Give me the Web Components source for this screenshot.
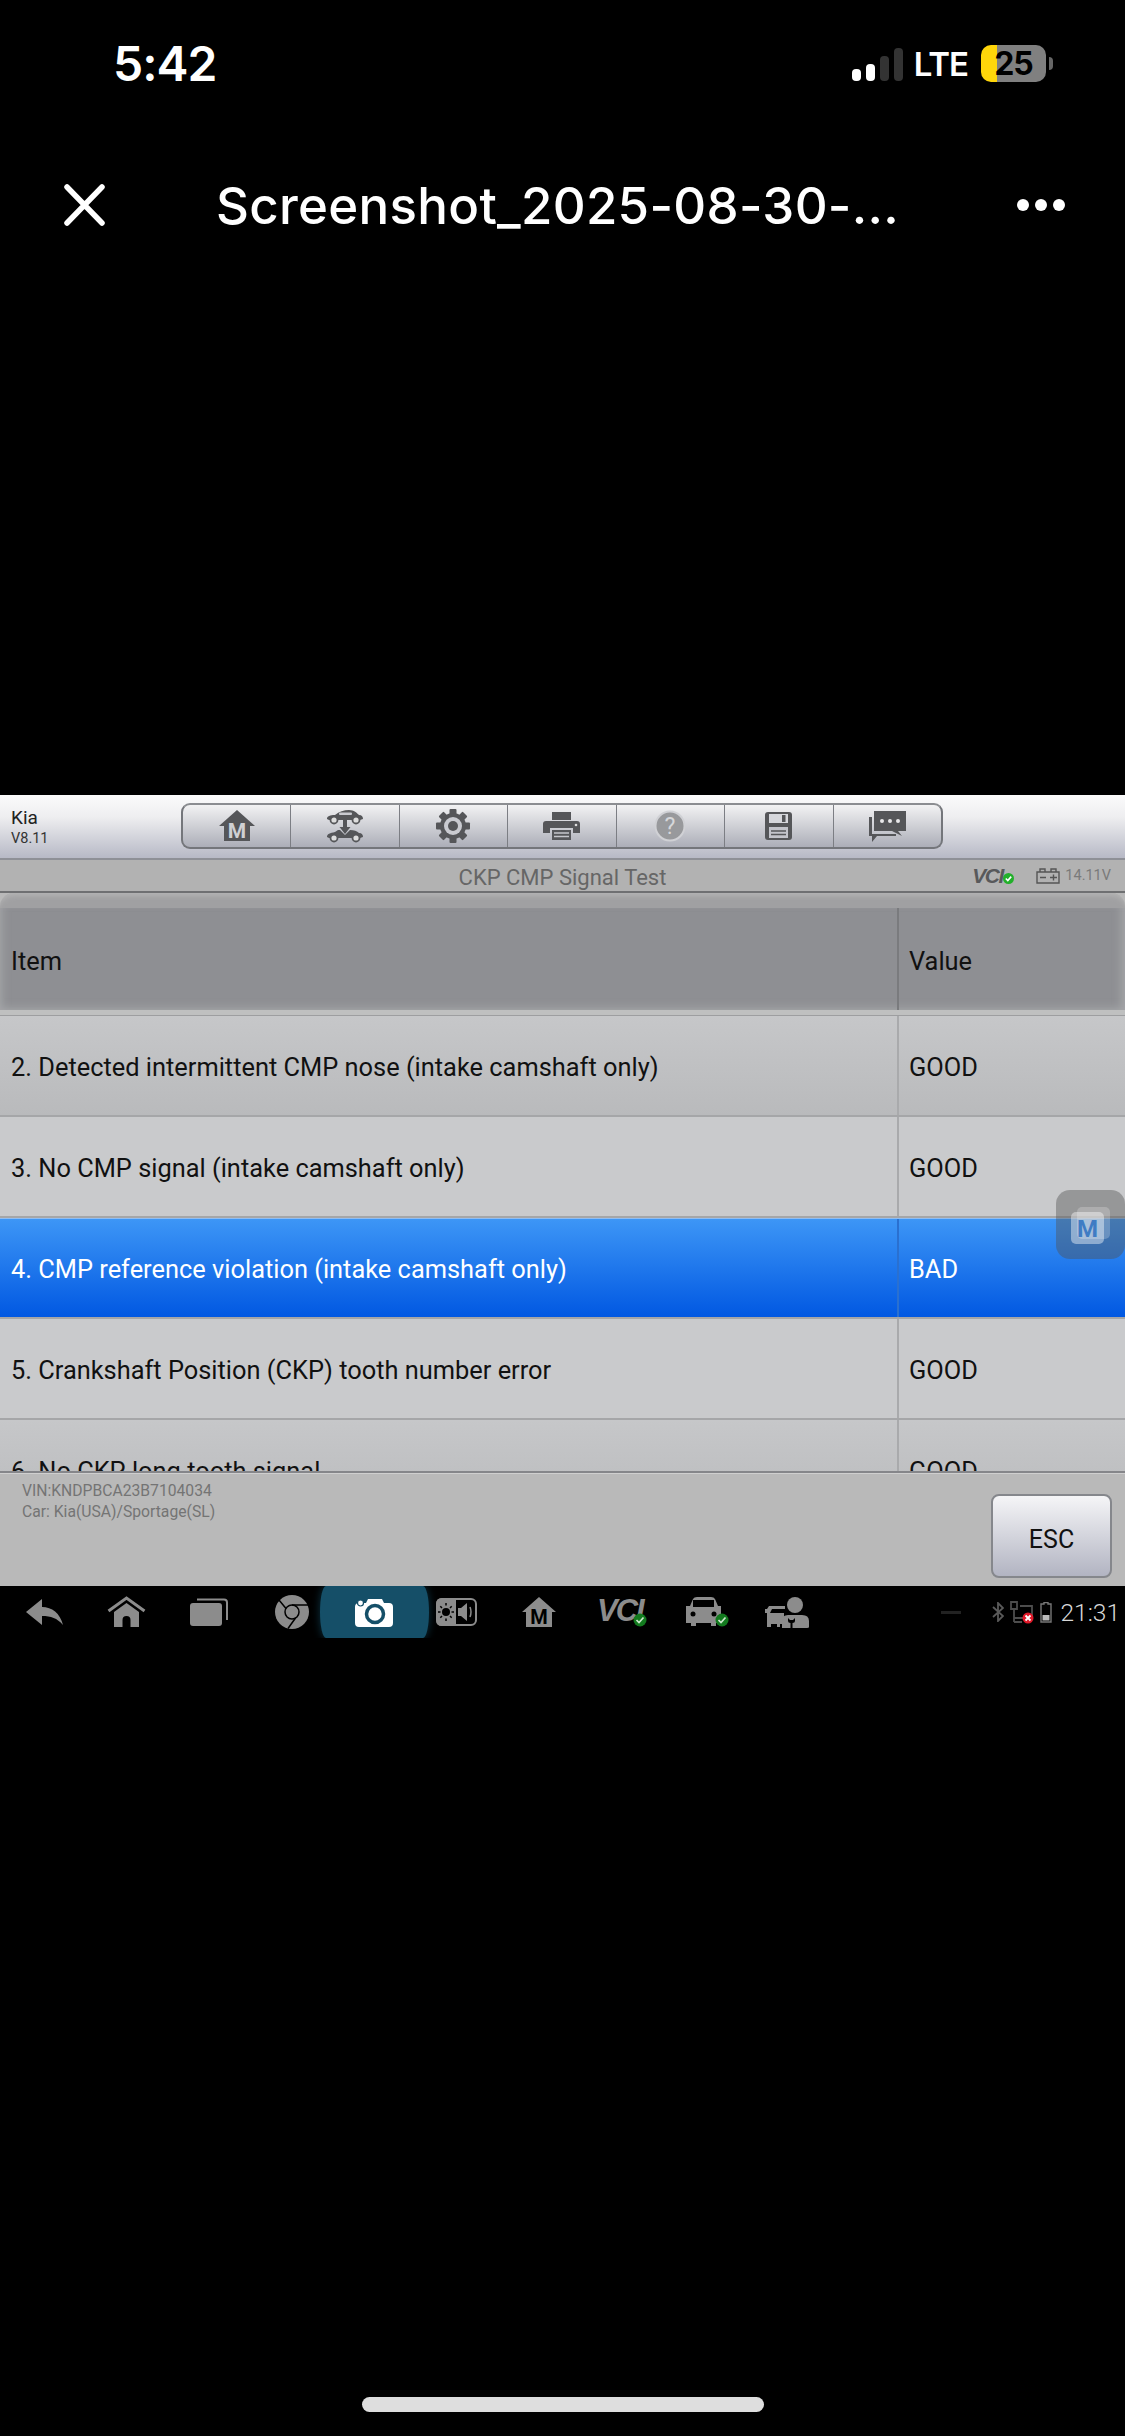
<!DOCTYPE html>
<html lang="en">
<head>
<meta charset="utf-8">
<title>Screenshot viewer</title>
<style>
  html, body { margin: 0; padding: 0; background: #000; }
  body { width: 1125px; height: 2436px; overflow: hidden; font-family: Roboto, sans-serif; }
</style>
</head>
<body>
<viewer-page>
  <phone-status slot="top"></phone-status>
  <viewer-header slot="top" title-text="Screenshot_2025-08-30-..."></viewer-header>
  <scan-screen slot="shot">
    <scan-appbar slot="appbar" make="Kia" version="V8.11"></scan-appbar>
    <title-strip slot="appbar" voltage="14.11V">CKP CMP Signal Test</title-strip>
    <data-table slot="table">
      <data-row item="2. Detected intermittent CMP nose (intake camshaft only)" value="GOOD" kind="even"></data-row>
      <data-row item="3. No CMP signal (intake camshaft only)" value="GOOD"></data-row>
      <data-row item="4. CMP reference violation (intake camshaft only)" value="BAD" kind="selected"></data-row>
      <data-row item="5. Crankshaft Position (CKP) tooth number error" value="GOOD"></data-row>
      <data-row item="6. No CKP long tooth signal" value="GOOD" kind="even"></data-row>
    </data-table>
    <scan-footer slot="footer" vin="VIN:KNDPBCA23B7104034" car="Car: Kia(USA)/Sportage(SL)"></scan-footer>
    <float-button slot="float"></float-button>
  </scan-screen>
  <system-nav slot="shot"></system-nav>
  <home-bar slot="bottom"></home-bar>
</viewer-page>

<script>
class ViewerPage extends HTMLElement {
  constructor() {
    super();
    this.shadowDOM = this.attachShadow({ mode: "open" });
    this.shadowDOM.innerHTML = `
      <style>
      :host { display: flex; flex-direction: column; width: 1125px; height: 2436px; background: #000; }
      .top { height: 795px; flex: none; }
      .bottom { flex: 1; display: flex; flex-direction: column; justify-content: flex-end; }
      </style>
      <div class="top"><slot name="top"></slot></div>
      <slot name="shot"></slot>
      <div class="bottom"><slot name="bottom"></slot></div>
    `;
  }
}

class PhoneStatus extends HTMLElement {
  constructor() {
    super();
    this.shadowDOM = this.attachShadow({ mode: "open" });
    this.shadowDOM.innerHTML = `
      <style>
      :host { display: flex; align-items: center; height: 127px; padding: 0 72px 0 113px; box-sizing: border-box; color: #fff; font-family: Inter, sans-serif; }
      .time { font-size: 48px; font-weight: 600; letter-spacing: -1px; flex: 1; }
      .bars { display: flex; align-items: flex-end; gap: 5px; height: 33px; margin-top: 1px; }
      .bars i { width: 9px; border-radius: 4px; background: #333; }
      .bars i:nth-child(1) { height: 12px; background: #fff; }
      .bars i:nth-child(2) { height: 17px; background: #fff; }
      .bars i:nth-child(3) { height: 25px; }
      .bars i:nth-child(4) { height: 33px; }
      .lte { font-size: 33px; font-weight: 600; margin: 0 13px 0 11px; letter-spacing: -1px; }
      .battery { position: relative; width: 65px; height: 37px; border-radius: 10px; overflow: hidden; background: linear-gradient(to right, #ffd60a 25%, #808080 25%); color: #000; font-size: 32px; font-weight: 700; text-align: center; line-height: 37px; letter-spacing: -1px; }
      .nub { width: 4px; height: 13px; margin-left: 3px; background: #666; border-radius: 0 4px 4px 0; }
      </style>
      <div class="time">5:42</div>
      <div class="bars"><i></i><i></i><i></i><i></i></div>
      <div class="lte">LTE</div>
      <div class="battery">25</div>
      <div class="nub"></div>
    `;
  }
}

class ViewerHeader extends HTMLElement {
  constructor() {
    super();
    this.shadowDOM = this.attachShadow({ mode: "open" });
  }

  connectedCallback() {
    this.shadowDOM.innerHTML = `
      <style>
      :host { display: flex; align-items: center; height: 156px; padding: 0 60px 0 64px; box-sizing: border-box; color: #fff; }
      svg { display: block; }
      .title { flex: 1; margin-left: 111px; font-family: Inter, sans-serif; font-size: 51px; font-weight: 500; letter-spacing: .3px; white-space: nowrap; }
      .dots { display: flex; gap: 6px; }
      .dots i { width: 12px; height: 12px; border-radius: 50%; background: #fff; }
      </style>
      <svg width="41" height="42" viewBox="0 0 41 42"><path d="M3 3 L38 39 M38 3 L3 39" stroke="#fff" stroke-width="5.5" stroke-linecap="round"/></svg>
      <div class="title">${this.getAttribute("title-text")}</div>
      <div class="dots"><i></i><i></i><i></i></div>
    `;
  }
}

class ScanScreen extends HTMLElement {
  constructor() {
    super();
    this.shadowDOM = this.attachShadow({ mode: "open" });
    this.shadowDOM.innerHTML = `
      <style>
      :host { display: flex; flex-direction: column; flex: none; position: relative; height: 791px; font-family: Roboto, sans-serif; background: #b9b9b9; }
      .float { position: absolute; right: 0; top: 395px; }
      </style>
      <slot name="appbar"></slot>
      <slot name="table"></slot>
      <slot name="footer"></slot>
      <div class="float"><slot name="float"></slot></div>
    `;
  }
}

class ScanAppbar extends HTMLElement {
  constructor() {
    super();
    this.shadowDOM = this.attachShadow({ mode: "open" });
  }

  connectedCallback() {
    const ink = "#555659";
    this.shadowDOM.innerHTML = `
      <style>
      :host { display: flex; align-items: center; flex: none; height: 65px; box-sizing: border-box; padding-left: 11px; background: linear-gradient(#fbfbfb, #eeeef0 35%, #b7b9c6); border-bottom: 2px solid #8e9097; }
      .make { width: 170px; color: #222; line-height: 1; margin-top: 2px; }
      .make b { display: block; font-weight: 400; font-size: 19px; }
      .make small { display: block; font-size: 14.5px; margin-top: 5px; color: #333; }
      .tools { display: flex; height: 46px; margin-top: -1px; box-sizing: border-box; border: 2px solid #74767b; border-top-color: #8b8d91; border-radius: 9px; background: linear-gradient(#f2f2f3, #acaeb8); overflow: hidden; }
      .tools span { display: flex; align-items: center; justify-content: center; width: 108.5px; border-left: 1.5px solid #7c7e84; box-sizing: border-box; }
      .tools span:first-child { border-left: 0; width: 107px; }
      svg { display: block; overflow: visible; }
      </style>
      <div class="make"><b>${this.getAttribute("make")}</b><small>${this.getAttribute("version")}</small></div>
      <div class="tools">
        <span><svg width="36" height="32" viewBox="0 0 36 32"><path d="M18 0 L36 16 H31 V31 H5 V16 H0Z" fill="${ink}"/><text x="18" y="28" text-anchor="middle" font-family="Roboto" font-weight="700" font-size="21" fill="#cfd0d3">M</text></svg></span>
        <span><svg width="38" height="32" viewBox="0 0 38 32" fill="${ink}">
          <path d="M1 9 C1 6 4 5 9 5 C13 1.500 18 0 23 0 C28 0 31 3 33 5 C36 5 37 7 37 9 L34 10 H3Z"/>
          <rect x="13" y="2.500" width="13" height="2.500" rx="1" fill="#c9cad0"/>
          <circle cx="8" cy="10" r="3.500" fill="#ddd" stroke="${ink}" stroke-width="1.800"/><circle cx="30" cy="10" r="3.500" fill="#ddd" stroke="${ink}" stroke-width="1.800"/>
          <path d="M17 9 H21 V17 H24.500 L19 24 L13.500 17 H17Z"/>
          <path d="M1 27 C1 24 4 23 9 22 L12 20 H14 L19 25 L24 20 C28 20 31 21 33 23 C36 23 37 25 37 27 L34 28 H3Z"/>
          <circle cx="8" cy="28" r="3.500" fill="#ddd" stroke="${ink}" stroke-width="1.800"/><circle cx="30" cy="28" r="3.500" fill="#ddd" stroke="${ink}" stroke-width="1.800"/>
        </svg></span>
        <span><svg width="34" height="34" viewBox="-17 -17 34 34">
          <g fill="${ink}"><rect x="-3.500" y="-17" width="7" height="34" rx="1"/><rect x="-3.500" y="-17" width="7" height="34" rx="1" transform="rotate(45)"/><rect x="-3.500" y="-17" width="7" height="34" rx="1" transform="rotate(90)"/><rect x="-3.500" y="-17" width="7" height="34" rx="1" transform="rotate(135)"/></g>
          <circle r="13" fill="${ink}"/><circle r="9" fill="#c9cad0"/><circle r="5" fill="${ink}"/>
        </svg></span>
        <span><svg width="37" height="28" viewBox="0 0 37 28" fill="${ink}">
          <rect x="9" y="0" width="19" height="8"/>
          <path d="M3 9 H34 Q37 9 37 12 V21 H30 V16 H7 V21 H0 V12 Q0 9 3 9Z"/>
          <rect x="9" y="18" width="19" height="10"/>
          <path d="M11 21 H26 M11 24.500 H26" stroke="#c5c6cc" stroke-width="1.500"/>
          <circle cx="33" cy="13" r="1.300" fill="#ddd"/>
        </svg></span>
        <span><svg width="32" height="32" viewBox="0 0 32 32"><circle cx="16" cy="16" r="14.500" fill="#98999c" stroke="#d0d1d5" stroke-width="2"/><text x="16" y="24" text-anchor="middle" font-family="Roboto" font-size="23" fill="#d6d7da">?</text></svg></span>
        <span><svg width="27" height="28" viewBox="0 0 27 28" fill="${ink}">
          <path d="M3 0 H24 Q27 0 27 3 V25 Q27 28 24 28 H3 Q0 28 0 25 V3 Q0 0 3 0Z"/>
          <rect x="4" y="2" width="19" height="9" fill="#d6d7dc"/><rect x="17" y="3" width="3.500" height="7"/>
          <rect x="4" y="15" width="19" height="11" fill="#c3c4cb"/>
          <path d="M6 19 H21 M6 22.500 H21" stroke="${ink}" stroke-width="1.300"/>
        </svg></span>
        <span><svg width="38" height="31" viewBox="0 0 38 31" fill="${ink}">
          <path d="M6 0 H38 V20 H30 L34 25 L24 20 H6Z"/>
          <path d="M1 6 H4 V23 H28 V25 H9 L4 31 V25 H1Z"/>
          <circle cx="14" cy="10" r="2" fill="#e8e8ea"/><circle cx="22" cy="10" r="2" fill="#e8e8ea"/><circle cx="30" cy="10" r="2" fill="#e8e8ea"/>
        </svg></span>
      </div>
    `;
  }
}

class TitleStrip extends HTMLElement {
  constructor() {
    super();
    this.shadowDOM = this.attachShadow({ mode: "open" });
  }

  connectedCallback() {
    this.shadowDOM.innerHTML = `
      <style>
      :host { display: grid; grid-template-columns: 1fr auto 1fr; align-items: center; flex: none; height: 33px; box-sizing: border-box; background: #b2b2b2; border-bottom: 2px solid #6f7072; }
      .name { grid-column: 2; font-size: 22px; color: #666; padding-top: 3px; }
      .right { grid-column: 3; display: flex; align-items: center; justify-content: flex-end; padding-right: 14px; color: #7a7a7a; font-size: 14.500px; }
      .vci { position: relative; font: italic 700 21px "Liberation Sans", sans-serif; color: #58595b; letter-spacing: -1.500px; width: 42px; }
      svg { display: block; margin: 0 5px 0 22px; }
      .check { position: absolute; right: 0; top: 9px; width: 11px; height: 11px; }
      </style>
      <div class="name"><slot></slot></div>
      <div class="right">
        <span class="vci">VCI<svg class="check" style="margin:0" viewBox="0 0 11 11"><circle cx="5.500" cy="5.500" r="5.500" fill="#22b02a"/><path d="M2.800 5.500 L4.800 7.500 L8.200 3.600" stroke="#fff" stroke-width="1.600" fill="none"/></svg></span>
        <svg width="24" height="16" viewBox="0 0 24 16" fill="none" stroke="#555" stroke-width="1.400"><path d="M1 4 H23 V15 H1Z M4 4 V1 H9 V4 M15 4 V1 H20 V4 M4 9.500 H10 M14 9.500 H21 M17.500 6.500 V12.500"/></svg>
        <span>${this.getAttribute("voltage")}</span>
      </div>
    `;
  }
}

class DataTable extends HTMLElement {
  constructor() {
    super();
    this.shadowDOM = this.attachShadow({ mode: "open" });
    this.shadowDOM.innerHTML = `
      <style>
      :host { display: flex; flex-direction: column; flex: 1; min-height: 0; overflow: hidden; color: #111; }
      .lip { flex: none; height: 15px; background: #a0a0a2; border-radius: 14px 14px 0 0; box-shadow: inset 0 6px 6px -4px #b8b8b8; }
      .head { flex: none; display: grid; grid-template-columns: 897px 1fr; height: 102px; font-size: 25.400px; background: #8e8f93; box-shadow: inset 0 -8px 8px -6px #a4a5a8, inset 8px 0 8px -6px #a4a5a8, inset -10px 0 8px -6px #a4a5a8; }
      .head div { display: flex; align-items: center; padding: 4px 0 0 11px; box-sizing: border-box; }
      .head div + div { border-left: 2px solid #7a7b7e; padding-left: 10px; }
      .gap { height: 6px; background: #bfc0c0; border-bottom: 1px solid #9d9ea0; box-sizing: border-box; flex: none; }
      </style>
      <div class="lip"></div>
      <div class="head"><div>Item</div><div>Value</div></div>
      <div class="gap"></div>
      <slot></slot>
    `;
  }
}

class DataRow extends HTMLElement {
  constructor() {
    super();
    this.shadowDOM = this.attachShadow({ mode: "open" });
  }

  connectedCallback() {
    this.shadowDOM.innerHTML = `
      <style>
      :host { display: grid; grid-template-columns: 897px 1fr; flex: none; height: 101px; box-sizing: border-box; font-size: 25.400px; background: #c9cacc; border-bottom: 2px solid #a5a6a8; }
      :host([kind="even"]) { background: linear-gradient(#c6c7c9, #b9babc); }
      :host([kind="selected"]) { background: linear-gradient(#3d96f6, #0158e2); color: #fff; border-top: 1px solid #8fbdf2; }
      div { display: flex; align-items: center; padding: 2px 0 0 11px; box-sizing: border-box; white-space: nowrap; }
      div + div { border-left: 2px solid #a9aaac; padding-left: 10px; }
      :host([kind="selected"]) div + div { border-left-color: #2a70d0; }
      </style>
      <div>${this.getAttribute("item")}</div>
      <div>${this.getAttribute("value")}</div>
    `;
  }
}

class ScanFooter extends HTMLElement {
  constructor() {
    super();
    this.shadowDOM = this.attachShadow({ mode: "open" });
  }

  connectedCallback() {
    this.shadowDOM.innerHTML = `
      <style>
      :host { display: flex; justify-content: space-between; flex: none; height: 115px; box-sizing: border-box; padding: 7px 13px 0 22px; background: #b9b9b9; border-top: 2px solid #85868a; box-shadow: inset 0 1px #cfcfcf; }
      .info { font-size: 15.700px; line-height: 21px; color: #747474; }
      button { width: 121px; height: 84px; margin-top: 14px; padding: 6px 0 0; border: 2px solid #85878c; border-radius: 8px; background: linear-gradient(#f5f5f7, #b2b4c2); color: #111; font: 25px Roboto, sans-serif; }
      </style>
      <div class="info">${this.getAttribute("vin")}<br>${this.getAttribute("car")}</div>
      <button>ESC</button>
    `;
  }
}

class FloatButton extends HTMLElement {
  constructor() {
    super();
    this.shadowDOM = this.attachShadow({ mode: "open" });
    this.shadowDOM.innerHTML = `
      <style>
      :host { display: block; width: 69px; height: 69px; border-radius: 14px; background: rgba(80, 80, 80, .42); }
      svg { display: block; }
      </style>
      <svg width="69" height="69" viewBox="0 0 69 69">
        <rect x="21" y="17" width="33" height="32" rx="5" fill="rgba(255,255,255,.22)"/>
        <rect x="15" y="22" width="33" height="32" rx="5" fill="rgba(255,255,255,.42)"/>
        <text x="31.500" y="47" text-anchor="middle" font-family="Roboto" font-weight="700" font-size="24" fill="#3f7cc4">M</text>
      </svg>
    `;
  }
}

class SystemNav extends HTMLElement {
  constructor() {
    super();
    this.shadowDOM = this.attachShadow({ mode: "open" });
    const g = "#8c8c8c";
    const badge = (cx, cy) => `<circle cx="${cx}" cy="${cy}" r="6.500" fill="#127a1e"/><path d="M${cx - 3.500} ${cy} l2.500 2.500 l4.500 -5" stroke="#cfe8d0" stroke-width="1.700" fill="none"/>`;
    this.shadowDOM.innerHTML = `
      <style>
      :host { display: flex; align-items: center; flex: none; height: 52px; padding-left: 3px; background: #000; }
      .cell { position: relative; display: flex; align-items: center; justify-content: center; width: 82.500px; height: 52px; flex: none; }
      .cell svg { position: relative; display: block; overflow: visible; }
      .cam::before { content: ""; position: absolute; top: 0; bottom: 0; left: -13px; right: -13px; border-radius: 6px / 26px; background: #154f68; box-shadow: 0 0 8px #0d3444; clip-path: inset(0 -10px); }
      .tray { display: flex; align-items: center; margin-left: auto; padding-right: 5px; gap: 6px; }
      .dash { width: 20px; height: 3px; background: #222; margin-right: 25px; }
      .clock { font-size: 24.500px; font-weight: 300; color: #d8d8d8; margin-left: 2px; }
      .tray svg { display: block; }
      </style>
      <span class="cell"><svg width="37" height="26" viewBox="0 0 37 26"><path d="M0 13 L16 0 V8 C26 8 34 14 37 26 C31 19 25 17 16 17 V26Z" fill="${g}"/></svg></span>
      <span class="cell"><svg width="39" height="32" viewBox="0 0 39 32"><path d="M1.500 15 L19.500 2 L37.500 15" fill="none" stroke="${g}" stroke-width="3"/><path d="M7 16 L19.500 7 L32 16 V31 H23.500 V24 A4 4 0 0 0 15.500 24 V31 H7Z" fill="${g}"/></svg></span>
      <span class="cell"><svg width="38" height="28" viewBox="0 0 38 28"><path d="M7 1.500 H34 Q37 1.500 37 4.500 V22" fill="none" stroke="${g}" stroke-width="2"/><rect x="0" y="5" width="32" height="23" rx="3" fill="${g}"/></svg></span>
      <span class="cell"><svg width="34" height="34" viewBox="0 0 34 34"><circle cx="17" cy="17" r="17" fill="${g}"/><circle cx="17" cy="17" r="7" fill="none" stroke="#000" stroke-width="1.500"/><path d="M17 10 H33 M11 13.500 L4 5 M20.500 23 L13 33.500" stroke="#000" stroke-width="1.500"/></svg></span>
      <span class="cell cam"><svg width="38" height="29" viewBox="0 0 38 29"><path d="M4 5 H11 L13 1 H27 L29 5 H34 Q38 5 38 9 V25 Q38 29 34 29 H4 Q0 29 0 25 V9 Q0 5 4 5Z" fill="#fff"/><circle cx="20" cy="16" r="8.500" fill="#fff" stroke="#154f68" stroke-width="3.500"/><circle cx="5.500" cy="5" r="3" fill="#fff" stroke="#154f68" stroke-width="1.200"/></svg></span>
      <span class="cell"><svg width="41" height="28" viewBox="0 0 41 28"><rect x="1" y="1" width="39" height="26" rx="5" fill="#000" stroke="${g}" stroke-width="2"/><path d="M6 0 H20 V28 H6 Q0 28 0 22 V6 Q0 0 6 0Z" fill="${g}"/><circle cx="10" cy="14" r="4" fill="#000"/><path d="M10 5 V7.500 M10 20.500 V23 M2 14 H4.500 M15.500 14 H18 M4.300 8.300 L6 10 M14 18 L15.700 19.700 M15.700 8.300 L14 10 M6 18 L4.300 19.700" stroke="#000" stroke-width="1.500"/><path d="M22 10 H25 L31 5 V23 L25 18 H22Z" fill="${g}"/><path d="M34 9 Q36 14 34 19" fill="none" stroke="${g}" stroke-width="1.500"/></svg></span>
      <span class="cell"><svg width="34" height="30" viewBox="0 0 34 30"><path d="M17 0 L34 15 H30 V30 H4 V15 H0Z" fill="${g}"/><text x="17" y="27" text-anchor="middle" font-family="Roboto" font-weight="700" font-size="20" fill="#000">M</text></svg></span>
      <span class="cell"><svg width="50" height="32" viewBox="0 0 50 32"><text x="0" y="25" font-family="Liberation Sans" font-style="italic" font-weight="700" font-size="31" letter-spacing="-2" fill="${g}">VCI</text>${badge(43, 24)}</svg></span>
      <span class="cell"><svg width="44" height="30" viewBox="-3 0 44 30"><path d="M8 2 Q9 0 12 0 H26 Q29 0 30 2 L33 9 H36 V13 L36 26 H31 V29 H26 V26 H11 V29 H6 V26 H1 V13 L1 9 H5Z" fill="${g}"/><rect x="8" y="3" width="21" height="7" fill="#000"/><circle cx="8" cy="17" r="2.500" fill="#000"/><circle cx="29" cy="17" r="2.500" fill="#000"/>${badge(37, 23)}</svg></span>
      <span class="cell"><svg width="44" height="31" viewBox="0 0 44 31"><path d="M4 9 H20 V12 L7 12 L5 16 H19 V27 H15 V30 H12 V27 H6 V30 H2 V16 H0 V12 H2Z" fill="${g}"/><circle cx="30" cy="8" r="8" fill="${g}"/><path d="M17 31 V24 Q17 18 23 18 H37 Q44 18 44 24 V30 Q44 31 42 31Z" fill="${g}"/><path d="M23 21 V24 Q23 26 25.500 26 V31 H27.500 V26 Q30 26 30 24 V21 L28 23 H25Z" fill="#000"/></svg></span>
      <div class="tray">
        <i class="dash"></i>
        <svg width="12" height="20" viewBox="0 0 12 20"><path d="M1 5 L11 14 L6 19 V1 L11 6 L1 15" fill="none" stroke="#5a5a5a" stroke-width="1.800"/></svg>
        <svg width="24" height="24" viewBox="0 0 24 24"><path d="M1 2 H7 V9 H1Z M4 9 V22 M10 6 H22 V17 M4 18 H14 M4 22 H12" fill="none" stroke="#4d4d4d" stroke-width="1.800"/><circle cx="18" cy="18" r="5.500" fill="#e01828"/><path d="M15.500 15.500 L20.500 20.500 M20.500 15.500 L15.500 20.500" stroke="#fff" stroke-width="1.800"/></svg>
        <svg width="12" height="21" viewBox="0 0 12 21"><path d="M4 .5 H8 V2 H11 V20 H1 V2 H4Z" fill="none" stroke="#777" stroke-width="1.400"/><rect x="2.500" y="13" width="7" height="5.500" fill="#bbb"/></svg>
        <span class="clock">21:31</span>
      </div>
    `;
  }
}

class HomeBar extends HTMLElement {
  constructor() {
    super();
    this.shadowDOM = this.attachShadow({ mode: "open" });
    this.shadowDOM.innerHTML = `
      <style>
      :host { display: flex; justify-content: center; padding-bottom: 24px; }
      i { width: 402px; height: 15px; border-radius: 8px; background: #dedede; margin-left: 1px; }
      </style>
      <i></i>
    `;
  }
}

customElements.define("viewer-page", ViewerPage);
customElements.define("phone-status", PhoneStatus);
customElements.define("viewer-header", ViewerHeader);
customElements.define("scan-screen", ScanScreen);
customElements.define("scan-appbar", ScanAppbar);
customElements.define("title-strip", TitleStrip);
customElements.define("data-table", DataTable);
customElements.define("data-row", DataRow);
customElements.define("scan-footer", ScanFooter);
customElements.define("float-button", FloatButton);
customElements.define("system-nav", SystemNav);
customElements.define("home-bar", HomeBar);
</script>
</body>
</html>
